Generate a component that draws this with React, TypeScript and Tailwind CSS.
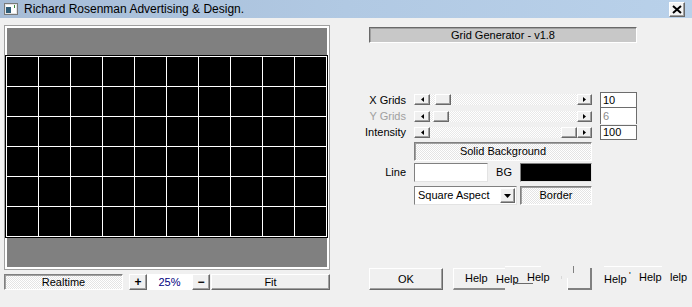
import React from 'react';

const raised =
  'border border-t-white border-l-white border-b-[#696969] border-r-[#696969] shadow-[inset_-1px_-1px_0_#a0a0a0] bg-[#f0f0f0]';
const pushed =
  'border border-t-[#808080] border-l-[#808080] border-b-white border-r-white shadow-[inset_1px_1px_0_#a0a0a0] bg-[repeating-conic-gradient(#ffffff_0_25%,#e4e4e4_0_50%)] bg-[length:2px_2px]';
const sunken = 'border border-t-[#808080] border-l-[#808080] border-b-[#e3e3e3] border-r-[#e3e3e3]';
const hatch = 'bg-[repeating-conic-gradient(#ffffff_0_25%,#e8e8e8_0_50%)] bg-[length:2px_2px]';

const ArrowLeft = () => (
  <svg width="3" height="5" viewBox="0 0 3 5">
    <path d="M3 0 L0 2.5 L3 5Z" fill="#000" />
  </svg>
);
const ArrowRight = () => (
  <svg width="3" height="5" viewBox="0 0 3 5">
    <path d="M0 0 L3 2.5 L0 5Z" fill="#000" />
  </svg>
);

function ScrollBar({ thumbClass }: { thumbClass: string }) {
  return (
    <div className="flex w-[178px] h-[11px]">
      <div className={`${raised} w-[16px] h-[11px] flex items-center justify-center`}>
        <ArrowLeft />
      </div>
      <div className={`flex-1 flex ${hatch}`}>
        <div className={`${raised} w-[16px] h-[11px] ${thumbClass}`} />
      </div>
      <div className={`${raised} w-[15px] h-[11px] flex items-center justify-center`}>
        <ArrowRight />
      </div>
    </div>
  );
}

function GridPreview() {
  const cols = Array.from({ length: 11 }, (_, i) => i);
  const rows = Array.from({ length: 7 }, (_, i) => i);
  return (
    <svg width="323" height="183" className="block -ml-[2px]">
      <rect width="323" height="183" fill="#000" />
      {cols.map((i) => (
        <line key={'c' + i} x1={1.5 + i * 32} x2={1.5 + i * 32} y1={1} y2={182} stroke="#fff" strokeWidth="1" />
      ))}
      {rows.map((j) => (
        <line key={'r' + j} x1={1} x2={322} y1={1.5 + j * 30} y2={1.5 + j * 30} stroke="#fff" strokeWidth="1" />
      ))}
    </svg>
  );
}

export default function App() {
  return (
    <div className="w-[692px] h-[307px] overflow-hidden bg-[#f0f0f0] text-black font-['Liberation_Sans',Arial,sans-serif] text-[11px] leading-[13px]">
      {/* title bar */}
      <div className="h-[18px] flex items-center bg-linear-to-r from-[#a6bcd6] via-[#b1c9e3] to-[#b9d1ea]">
        <svg width="14" height="12" viewBox="0 0 14 12" className="ml-[4px]">
          <rect x="0.5" y="0.5" width="13" height="11" fill="#e4e4e4" stroke="#7a7a7a" />
          <rect x="2" y="2" width="10" height="8" fill="#fff" />
          <rect x="2" y="4" width="5" height="6" fill="#2f5d78" />
          <rect x="10" y="2" width="1" height="3" fill="#3a8a3a" />
        </svg>
        <span className="ml-[6px] text-[12px] leading-[16px] text-black">Richard Rosenman Advertising &amp; Design.</span>
        <div className={`${raised} ml-auto mr-[7px] w-[16px] h-[15px] flex items-center justify-center bg-[#f4f4f4]`}>
          <svg width="10" height="9" viewBox="0 0 10 9">
            <path d="M1 1 L9 8 M9 1 L1 8" stroke="#000" strokeWidth="2" />
          </svg>
        </div>
      </div>

      <div className="flex">
        {/* left column */}
        <div className="ml-[4px] mt-[7px] w-[326px]">
          <div className="border border-[#a0a0a0] bg-white p-[2px]">
            <div className="bg-[#808080] h-[239px] pt-[27px]">
              <GridPreview />
            </div>
          </div>
          <div className="mt-[4px] flex h-[16px]">
            <div className={`${pushed} w-[119px] flex items-center justify-center`}>Realtime</div>
            <div className={`${raised} ml-[6px] w-[18px] flex items-center justify-center font-bold text-[12px]`}>+</div>
            <div className="w-[45px] bg-white flex items-center justify-center text-[#000080]">25%</div>
            <div className={`${raised} w-[18px] flex items-center justify-center font-bold text-[12px]`}>−</div>
            <div className={`${raised} ml-[1px] w-[119px] flex items-center justify-center`}>Fit</div>
          </div>
        </div>

        {/* right column */}
        <div className="ml-[39px] w-[323px]">
          <div className="mt-[9px] w-[268px] h-[16px] bg-[#c8c8c8] border border-t-[#696969] border-l-[#696969] border-b-white border-r-white shadow-[inset_1px_1px_0_#a0a0a0] flex items-center justify-center">
            Grid Generator - v1.8
          </div>

          <div className="mt-[49px] flex flex-col">
            <div className="flex h-[16px] items-center">
              <div className="w-[37px] flex justify-end whitespace-nowrap">X Grids</div>
              <div className="ml-[8px] -mt-[2px]">
                <ScrollBar thumbClass="ml-[5px]" />
              </div>
              <div className="ml-[8px] w-[37px] h-[16px] border border-[#6d6d6d] bg-white pl-[2px] flex items-center">10</div>
            </div>
            <div className="flex h-[16px] items-center">
              <div className="w-[37px] flex justify-end whitespace-nowrap text-[#a0a0a0]">Y Grids</div>
              <div className="ml-[8px]">
                <ScrollBar thumbClass="ml-[3px]" />
              </div>
              <div className="ml-[8px] w-[37px] h-[16px] self-start border-x border-[#6d6d6d] bg-white pl-[2px] flex items-center text-[#8c8c8c]">6</div>
            </div>
            <div className="flex h-[16px] items-center">
              <div className="w-[37px] flex justify-end whitespace-nowrap">Intensity</div>
              <div className="ml-[8px]">
                <ScrollBar thumbClass="ml-auto" />
              </div>
              <div className="ml-[8px] w-[37px] h-[15px] border border-[#6d6d6d] bg-white pl-[2px] flex items-center">100</div>
            </div>
          </div>

          <div className={`${pushed} mt-[2px] ml-[45px] w-[178px] h-[19px] flex items-center justify-center`}>
            Solid Background
          </div>

          <div className="mt-[2px] flex h-[19px] items-center">
            <div className="w-[37px] flex justify-end">Line</div>
            <div className={`${sunken} ml-[8px] w-[74px] h-[19px] bg-white`} />
            <div className="w-[32px] flex justify-center">BG</div>
            <div className={`${sunken} w-[72px] h-[19px] bg-black`} />
          </div>

          <div className="mt-[4px] flex h-[19px]">
            <div className={`${sunken} ml-[45px] w-[103px] h-[19px] bg-white flex items-center border-t-[#404040] border-l-[#404040]`}>
              <span className="pl-[3px] flex-1">Square Aspect</span>
              <div className={`${raised} w-[15px] h-[15px] mr-[1px] flex items-center justify-center`}>
                <svg width="7" height="4" viewBox="0 0 7 4">
                  <path d="M0 0 L7 0 L3.5 4Z" fill="#000" />
                </svg>
              </div>
            </div>
            <div className={`${pushed} ml-[3px] w-[72px] h-[19px] flex items-center justify-center`}>Border</div>
          </div>

          {/* buttons row */}
          <div className="mt-[63px] flex h-[22px]">
            <div className={`${raised} w-[74px] h-[22px] flex items-center justify-center`}>OK</div>
            <div className="relative flex-1 h-[22px]">
              <div className="ml-[10px] w-[52px] h-[22px] border-l border-t border-l-white border-t-white border-b-2 border-b-[#8a8a8a] pl-[11px] flex items-center">
                Help
              </div>
              {/* redraw debris left over from the help buttons */}
              <span className="absolute left-[53px] top-[5px] bg-[#f0f0f0]">Help</span>
              <div className="absolute left-[72px] top-[15px] w-[18px] h-[1px] bg-[#6a6a6a]" />
              <div className="absolute left-[62px] -top-[2px] w-[36px] h-[1px] bg-white" />
              <span className="absolute left-[84px] top-[3px]">Help</span>
              <div className="absolute left-[118px] top-[8px] w-[1px] h-[3px] bg-[#d8d8d8]" />
              <div className="absolute left-[124px] top-[10px] w-[1px] h-[12px] bg-white" />
              <div className="absolute left-[125px] top-[20px] w-[24px] h-[2px] bg-[#808080]" />
              <div className="absolute left-[130px] -top-[2px] w-[1px] h-[7px] bg-[#808080]" />
              <div className="absolute left-[147px] top-0 w-[2px] h-[22px] bg-[#808080]" />
              <div className="absolute left-[161px] -top-[2px] w-[58px] h-[1px] bg-white" />
              <span className="absolute left-[161px] top-[5px]">Help</span>
              <span className="absolute left-[186px] top-[1px] text-[9px]">'</span>
              <span className="absolute left-[196px] top-[3px]">Help</span>
              <span className="absolute left-[227px] top-[3px]">lelp</span>
            </div>
          </div>
        </div>
      </div>
    </div>
  );
}
